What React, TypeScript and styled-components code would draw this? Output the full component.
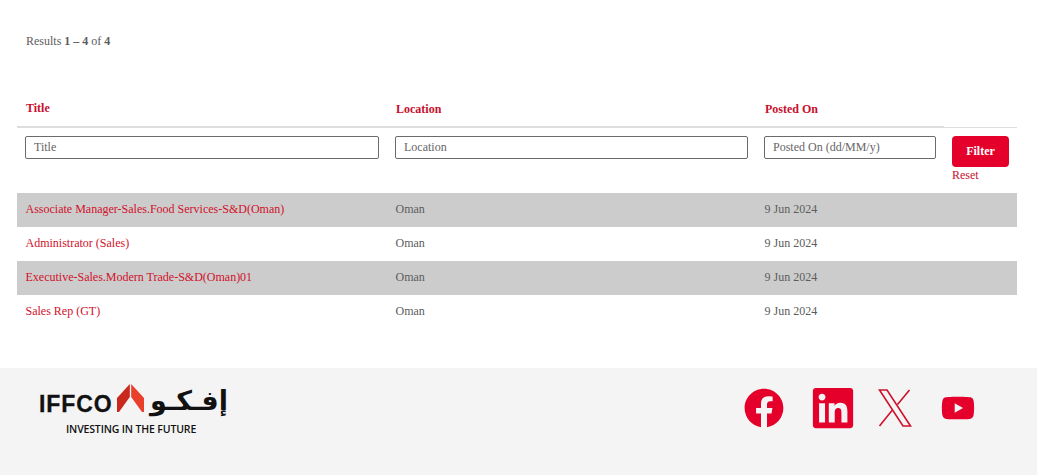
import styled, { createGlobalStyle } from "styled-components";
import { FaFacebook, FaLinkedin, FaYoutube } from "react-icons/fa";

const GlobalStyle = createGlobalStyle`
  html, body {
    margin: 0;
    padding: 0;
    background: #fff;
  }
  body {
    font-family: "Liberation Serif", "Times New Roman", serif;
    font-size: 12px;
    color: #5c5c5c;
  }
`;

const Page = styled.div`
  width: 1037px;
  height: 475px;
  overflow: hidden;
  display: flex;
  flex-direction: column;
`;

const Main = styled.main`
  height: 368px;
  padding: 0 20px 0 17px;
`;

const Results = styled.p`
  margin: 0;
  padding: 34px 0 0 9px;
  height: 88px;
  box-sizing: border-box;
  line-height: 15px;

  b {
    font-weight: 700;
  }
`;

const columns = "370px 369px 188px 73px";

const HeadRow = styled.div`
  display: grid;
  grid-template-columns: ${columns};
  height: 40px;
`;

const HeadCell = styled.div<{ $lift?: boolean; $last?: boolean }>`
  padding: ${(p) => (p.$lift ? "13px" : "14px")} 9px 0;
  line-height: 15px;
  font-weight: 700;
  color: #c8102e;
  border-bottom: ${(p) => (p.$last ? "1px" : "2px")} solid #ddd;
  box-sizing: border-box;
`;

const FilterRow = styled.div`
  display: grid;
  grid-template-columns: ${columns};
  height: 65px;
  box-sizing: border-box;
  padding-top: 8px;
`;

const FilterCell = styled.div`
  padding: 0 8px;
`;

const FilterInput = styled.input`
  display: block;
  width: 100%;
  height: 23px;
  box-sizing: border-box;
  border: 1px solid #6b6b6b;
  border-radius: 2px;
  padding: 0 8px;
  font: inherit;
  color: #555;
  background: #fff;
  outline: none;

  &::placeholder {
    color: #666;
    opacity: 1;
  }
`;

const Actions = styled.div`
  display: flex;
  flex-direction: column;
  align-items: flex-start;
`;

const FilterButton = styled.button`
  width: 57px;
  height: 31px;
  border: 0;
  border-radius: 4px;
  background: #e4002b;
  color: #fff;
  font: inherit;
  font-weight: 700;
  padding: 0;
`;

const ResetLink = styled.a`
  color: #c8102e;
  line-height: 15px;
  margin-top: 1px;
`;

const JobRow = styled.div<{ $shaded: boolean }>`
  display: grid;
  grid-template-columns: ${columns};
  height: 34px;
  align-items: center;
  background: ${(p) => (p.$shaded ? "#cccccc" : "#fff")};
`;

const JobCell = styled.div`
  padding: 0 8.5px 2px;
  line-height: 15px;
`;

const JobLink = styled.a`
  color: #d0112b;
`;

const Footer = styled.footer`
  flex: 1;
  background: #f4f4f4;
  display: flex;
  justify-content: space-between;
  padding: 16px 62px 0 39px;
`;

const Logo = styled.div`
  width: 190px;
  display: flex;
  flex-direction: column;
  color: #111;
`;

const LogoMark = styled.div`
  display: flex;
  align-items: flex-end;
  height: 28px;

  svg {
    flex-shrink: 0;
  }
`;

const LogoLatin = styled.span`
  font-family: "Liberation Sans", Arial, sans-serif;
  font-weight: 700;
  font-size: 23px;
  letter-spacing: 0.9px;
  line-height: 16px;
  height: 16px;
  -webkit-text-stroke: 0.3px #111;
  flex: 0 0 78px;
  white-space: nowrap;
`;

const LogoArabic = styled.span`
  font-family: "DejaVu Sans", sans-serif;
  font-weight: 700;
  font-size: 27px;
  line-height: 28px;
  height: 28px;
  margin: 0 0 -3px 6px;
  flex: 0 0 auto;
  white-space: nowrap;
`;

const Tagline = styled.span`
  font-family: "Open Sans", "Liberation Sans", sans-serif;
  font-size: 10.5px;
  font-weight: 600;
  letter-spacing: -0.15px;
  line-height: 14px;
  margin: 10px 0 0 27px;
  white-space: nowrap;
`;

const Socials = styled.nav`
  display: flex;
  align-items: center;
  height: 48px;
`;

const SocialLink = styled.a<{ $gap: number }>`
  display: flex;
  margin-left: ${(p) => p.$gap}px;
  color: #e4002b;
`;

const LinkedinIcon = styled(FaLinkedin)`
  margin: -3px;
`;

const jobs = [
  "Associate Manager-Sales.Food Services-S&D(Oman)",
  "Administrator (Sales)",
  "Executive-Sales.Modern Trade-S&D(Oman)01",
  "Sales Rep (GT)",
];

const ArrowMark = () => (
  <svg width="27" height="28" viewBox="0 0 27 28">
    <path d="M12.8 0 V13 L2 28 H0 V14 Z" fill="#c9281c" />
    <path d="M14.2 0 L27 14 V28 H25 L14.2 13 Z" fill="#e9402c" />
  </svg>
);

const XOutline = () => (
  <svg width="34" height="38" viewBox="0 0 34 38" fill="none" stroke="#d0112b" strokeWidth="1.6">
    <path d="M1.5 1 H9 L32.5 37 H25 Z" />
    <path d="M31.5 1 L19.5 15.5 M14 21.5 L1.5 37" />
  </svg>
);

const App = () => {
  return (
    <Page>
      <GlobalStyle />
      <Main>
        <Results>
          Results <b>1 – 4</b> of <b>4</b>
        </Results>

        <HeadRow>
          <HeadCell $lift>Title</HeadCell>
          <HeadCell>Location</HeadCell>
          <HeadCell>Posted On</HeadCell>
          <HeadCell $last />
        </HeadRow>

        <FilterRow>
          <FilterCell>
            <FilterInput placeholder="Title" />
          </FilterCell>
          <FilterCell>
            <FilterInput placeholder="Location" />
          </FilterCell>
          <FilterCell>
            <FilterInput placeholder="Posted On (dd/MM/y)" />
          </FilterCell>
          <FilterCell>
            <Actions>
              <FilterButton>Filter</FilterButton>
              <ResetLink>Reset</ResetLink>
            </Actions>
          </FilterCell>
        </FilterRow>

        {jobs.map((job, i) => (
          <JobRow key={job} $shaded={i % 2 === 0}>
            <JobCell>
              <JobLink>{job}</JobLink>
            </JobCell>
            <JobCell>Oman</JobCell>
            <JobCell>9 Jun 2024</JobCell>
            <JobCell />
          </JobRow>
        ))}
      </Main>

      <Footer>
        <Logo>
          <LogoMark>
            <LogoLatin>IFFCO</LogoLatin>
            <ArrowMark />
            <LogoArabic dir="rtl">إفـكـو</LogoArabic>
          </LogoMark>
          <Tagline>INVESTING IN THE FUTURE</Tagline>
        </Logo>

        <Socials>
          <SocialLink $gap={0}>
            <FaFacebook size={40} />
          </SocialLink>
          <SocialLink $gap={29}>
            <LinkedinIcon size={46} />
          </SocialLink>
          <SocialLink $gap={25}>
            <XOutline />
          </SocialLink>
          <SocialLink $gap={29}>
            <FaYoutube size={34} />
          </SocialLink>
        </Socials>
      </Footer>
    </Page>
  );
};

export default App;
